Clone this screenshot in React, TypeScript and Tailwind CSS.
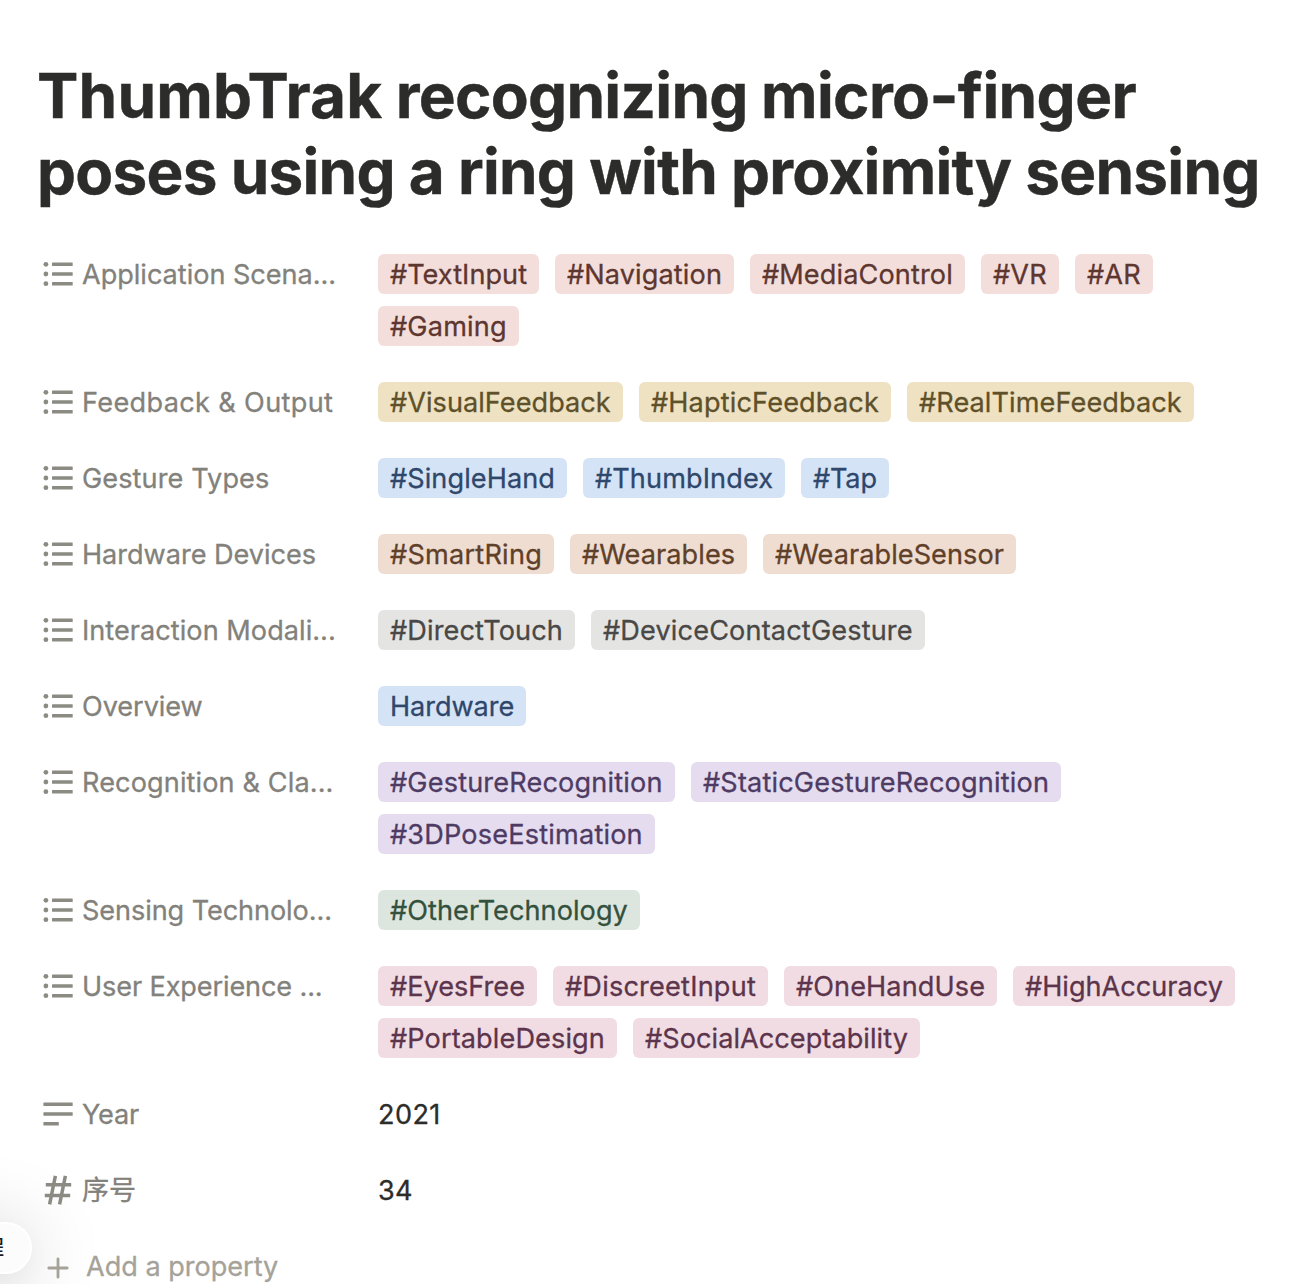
import type { ReactNode } from 'react';

type Tag = [label: string, fit: string];
type Property = { name: string; fit: string; color: string; tags: Tag[] };

const properties: Property[] = [
  {
    name: 'Application Scena...',
    fit: 'tracking-[-0.02px]',
    color: 'bg-[#f4dedb] text-[#5d3630]',
    tags: [
      ['#TextInput', 'w-[161px] tracking-[0.04px]'],
      ['#Navigation', 'w-[179px] tracking-[0.12px]'],
      ['#MediaControl', 'w-[215px] tracking-[0.12px]'],
      ['#VR', 'w-[78px] tracking-[0.2px]'],
      ['#AR', 'w-[78px] tracking-[0.2px]'],
      ['#Gaming', 'w-[141px] tracking-[0.18px]'],
    ],
  },
  {
    name: 'Feedback & Output',
    fit: 'tracking-[0.35px]',
    color: 'bg-[#eee2c3] text-[#5e5029]',
    tags: [
      ['#VisualFeedback', 'w-[245px] tracking-[0.05px]'],
      ['#HapticFeedback', 'w-[252px] tracking-[0.16px]'],
      ['#RealTimeFeedback', 'w-[287px] tracking-[0.1px]'],
    ],
  },
  {
    name: 'Gesture Types',
    fit: 'tracking-[0.1px]',
    color: 'bg-[#d5e3f6] text-[#2e476b]',
    tags: [
      ['#SingleHand', 'w-[189px] tracking-[0.09px]'],
      ['#ThumbIndex', 'w-[202px] tracking-[0.11px]'],
      ['#Tap', 'w-[88px] tracking-[-0.15px]'],
    ],
  },
  {
    name: 'Hardware Devices',
    fit: 'tracking-[-0.02px]',
    color: 'bg-[#efddd2] text-[#5f4029]',
    tags: [
      ['#SmartRing', 'w-[176px] tracking-[0.24px]'],
      ['#Wearables', 'w-[177px] tracking-[0.07px]'],
      ['#WearableSensor', 'w-[253px] tracking-[0.06px]'],
    ],
  },
  {
    name: 'Interaction Modali...',
    fit: 'tracking-[0.04px]',
    color: 'bg-[#e4e4e2] text-[#494846]',
    tags: [
      ['#DirectTouch', 'w-[197px] tracking-[0.13px]'],
      ['#DeviceContactGesture', 'w-[334px] tracking-[0.16px]'],
    ],
  },
  {
    name: 'Overview',
    fit: 'tracking-[-0.05px]',
    color: 'bg-[#d5e3f6] text-[#2e476b]',
    tags: [['Hardware', 'w-[148px] tracking-[-0.06px]']],
  },
  {
    name: 'Recognition & Cla...',
    fit: 'tracking-[0.12px]',
    color: 'bg-[#e5dcef] text-[#4e3b63]',
    tags: [
      ['#GestureRecognition', 'w-[297px] tracking-[0.17px]'],
      ['#StaticGestureRecognition', 'w-[370px] tracking-[0.17px]'],
      ['#3DPoseEstimation', 'w-[277px] tracking-[0.19px]'],
    ],
  },
  {
    name: 'Sensing Technolo...',
    fit: 'tracking-[-0.08px]',
    color: 'bg-[#dce6de] text-[#33513d]',
    tags: [['#OtherTechnology', 'w-[262px] tracking-[0.07px]']],
  },
  {
    name: 'User Experience ...',
    fit: 'tracking-[-0.12px]',
    color: 'bg-[#f1dce3] text-[#5c344b]',
    tags: [
      ['#EyesFree', 'w-[159px] tracking-[0.02px]'],
      ['#DiscreetInput', 'w-[215px] tracking-[0.21px]'],
      ['#OneHandUse', 'w-[213px] tracking-[0.11px]'],
      ['#HighAccuracy', 'w-[222px] tracking-[0.02px]'],
      ['#PortableDesign', 'w-[239px] tracking-[0.12px]'],
      ['#SocialAcceptability', 'w-[287px] tracking-[0.06px]'],
    ],
  },
];

function ListIcon() {
  return (
    <svg width="30" height="26" viewBox="0 0 30 26" fill="#8b8a83" className="shrink-0">
      <circle cx="2.9" cy="3.3" r="2.4" />
      <circle cx="2.9" cy="13" r="2.4" />
      <circle cx="2.9" cy="22.7" r="2.4" />
      <rect x="9" y="1.5" width="20.7" height="3.6" rx="0.6" />
      <rect x="9" y="11.2" width="20.7" height="3.6" rx="0.6" />
      <rect x="9" y="20.9" width="20.7" height="3.6" rx="0.6" />
    </svg>
  );
}

function TextIcon() {
  return (
    <svg width="30" height="26" viewBox="0 0 30 26" fill="#8b8a83" className="shrink-0">
      <rect x="0.4" y="1.5" width="29.3" height="3.6" rx="0.6" />
      <rect x="0.4" y="11.2" width="29.3" height="3.6" rx="0.6" />
      <rect x="0.4" y="20.9" width="15.4" height="3.6" rx="0.6" />
    </svg>
  );
}

function NumberIcon() {
  return (
    <svg width="30" height="30" viewBox="0 0 30 30" fill="none" stroke="#8b8a83" strokeWidth="3.5" className="shrink-0">
      <path d="M2.8 9.8H28.2M1.8 20.5H27.2M12.4 0.8L6.6 29.4M22.4 0.8L16.6 29.4" />
    </svg>
  );
}

function Row({ icon, name, fit, children }: { icon: ReactNode; name: string; fit: string; children: ReactNode }) {
  return (
    <div className="flex items-start">
      <div className="flex h-10 w-[335px] shrink-0 items-center gap-[9px] whitespace-nowrap text-[#82817b]">
        {icon}
        <span className={`h-10 ${fit}`}>{name}</span>
      </div>
      {children}
    </div>
  );
}

export default function App() {
  return (
    <div className='relative h-[1284px] w-[1306px] overflow-hidden bg-white font-["Inter","Noto_Sans_CJK_SC",sans-serif] text-[27.1px] leading-[42px]'>
      <div className="absolute top-[1222px] left-[-90px] z-0 flex h-[52px] w-[122px] items-center justify-end rounded-full border-2 border-white bg-[#fcfcfc] pr-[26px] text-[20px] font-medium text-[#1a1a1a] shadow-[0_8px_80px_rgba(0,0,0,0.2),0_8px_24px_rgba(0,0,0,0.03)]">
        课程
      </div>

      <main className="relative pt-[58px] pl-[43px]">
        <h1 className="-ml-[6px] text-[62px] leading-[76px] font-bold whitespace-nowrap text-[#2c2c2a] [-webkit-text-stroke:0.4px]">
          <span className="block [word-spacing:-1.5px]">
            <span className="tracking-[0.2px]">ThumbTrak</span> <span className="tracking-[-0.7px]">recognizing</span>{' '}
            <span className="tracking-[-0.62px]">micro-finger</span>
          </span>
          <span className="block tracking-[-0.75px]">poses using a ring with proximity sensing</span>
        </h1>

        <section className="mt-11 flex flex-col gap-9 [-webkit-text-stroke:0.3px]">
          {properties.map((property) => (
            <Row key={property.name} icon={<ListIcon />} name={property.name} fit={property.fit}>
              <div className="flex w-[870px] flex-wrap gap-x-4 gap-y-3">
                {property.tags.map(([label, fit]) => (
                  <span key={label} className={`h-10 rounded-[6px] pl-3 whitespace-nowrap ${property.color} ${fit}`}>
                    {label}
                  </span>
                ))}
              </div>
            </Row>
          ))}
          <Row icon={<TextIcon />} name="Year" fit="tracking-[-0.2px]">
            <span className="h-10 tracking-[0.4px] text-[#2c2c2a]">2021</span>
          </Row>
          <Row icon={<NumberIcon />} name="序号" fit="tracking-normal">
            <span className="h-10 tracking-[0.2px] text-[#2c2c2a]">34</span>
          </Row>
          <div className="flex h-10 items-center text-[#a5a299]">
            <svg width="30" height="30" viewBox="0 0 30 30" fill="none" stroke="currentColor" strokeWidth="2.8" strokeLinecap="round" className="translate-y-[2px]">
              <path d="M5.8 15H24.2M15 5.8V24.2" />
            </svg>
            <span className="ml-[13px] h-10 tracking-[-0.02px]">Add a property</span>
          </div>
        </section>
      </main>
    </div>
  );
}
